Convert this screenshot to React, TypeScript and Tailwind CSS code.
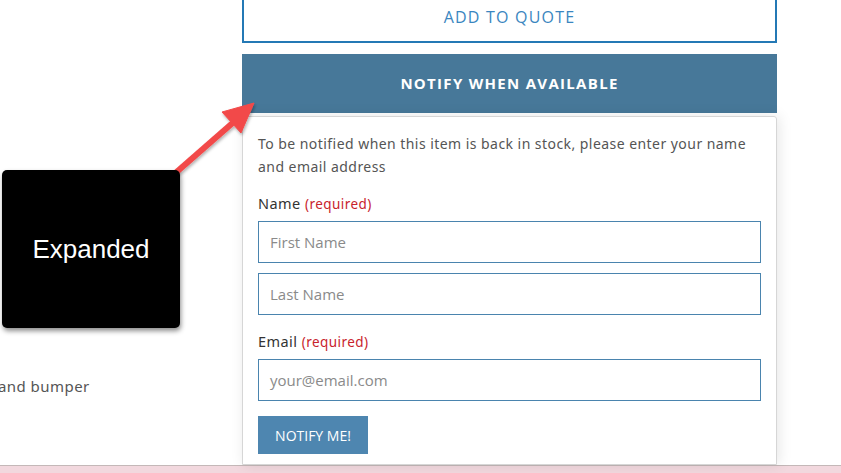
import React from 'react';

const sans = "font-['Noto_Sans',sans-serif] tracking-[0.45px]";
const open = "font-['Open_Sans',sans-serif]";

const Field: React.FC<{ placeholder: string; className?: string }> = ({ placeholder, className = '' }) => (
  <div
    className={`h-[42px] border border-[#4a84ae] bg-white flex items-center px-[11px] text-[15px] text-[#8a8a8a] ${open} ${className}`}
  >
    {placeholder}
  </div>
);

const Label: React.FC<{ text: string; className?: string }> = ({ text, className = '' }) => (
  <div className={`h-[20px] leading-[20px] text-[14.5px] text-[#333] ${sans} ${className}`}>
    {text} <span className="text-[13.5px] text-[#c8232c]">(required)</span>
  </div>
);

const App: React.FC = () => {
  return (
    <div className="relative w-[841px] h-[473px] overflow-hidden bg-white">
      <div className="flex h-[465px]">
        {/* left column, product copy */}
        <div className="w-[242px] flex flex-col justify-end pb-[68px]">
          <p className={`-ml-[2px] text-[15px] leading-[22px] text-[#555] ${sans}`}>and bumper</p>
        </div>

        {/* right column, purchase actions */}
        <div className="w-[535px] -mt-[16px] flex flex-col">
          <button
            className={`h-[59px] pt-[6px] border-2 border-[#2479b5] text-[#3a86c0] text-[16px] tracking-[1.2px] ${open}`}
          >
            ADD TO QUOTE
          </button>
          <button
            className={`mt-[11px] h-[59px] bg-[#477899] text-white text-[15px] font-bold tracking-[1.3px] ${open}`}
          >
            NOTIFY WHEN AVAILABLE
          </button>

          <div className="mt-[3px] flex-1 border border-[#d6d6d6] rounded-t-[3px] shadow-[2px_0_14px_rgba(0,0,0,0.1)] px-[15px] pt-[15px]">
            <p className={`text-[14px] leading-[23px] text-[#555] ${sans}`}>
              To be notified when this item is back in stock, please enter your name and email address
            </p>
            <Label text="Name" className="mt-[15px]" />
            <Field placeholder="First Name" className="mt-[8px]" />
            <Field placeholder="Last Name" className="mt-[10px]" />
            <Label text="Email" className="mt-[16px]" />
            <Field placeholder="your@email.com" className="mt-[8px]" />
            <button
              className={`mt-[15px] h-[38px] w-[110px] bg-[#4e86b0] text-white text-[14px] ${open}`}
            >
              NOTIFY ME!
            </button>
          </div>
        </div>
      </div>

      {/* bottom strip */}
      <div className="h-[8px] border-t border-[#c4b8b8] bg-[#f2d8de]" />

      {/* annotation arrow */}
      <svg className="absolute left-0 top-0 pointer-events-none" width="841" height="473">
        <defs>
          <filter id="sh" x="-20%" y="-20%" width="140%" height="140%">
            <feDropShadow dx="1" dy="2" stdDeviation="1.5" floodColor="#000" floodOpacity="0.3" />
          </filter>
        </defs>
        <g filter="url(#sh)" fill="#f24a4a" stroke="#f24a4a">
          <line x1="172" y1="176" x2="236" y2="120" strokeWidth="6" />
          <polygon points="254,103 222,112 241,133" strokeWidth="1" strokeLinejoin="round" />
        </g>
      </svg>

      {/* annotation label */}
      <div className="absolute left-[2px] top-[170px] w-[178px] h-[158px] rounded-[5px] bg-black shadow-[1px_3px_5px_rgba(0,0,0,0.45)] flex items-center justify-center">
        <span className="text-white text-[26px] font-['Liberation_Sans',Arial,sans-serif]">Expanded</span>
      </div>
    </div>
  );
};

export default App;
